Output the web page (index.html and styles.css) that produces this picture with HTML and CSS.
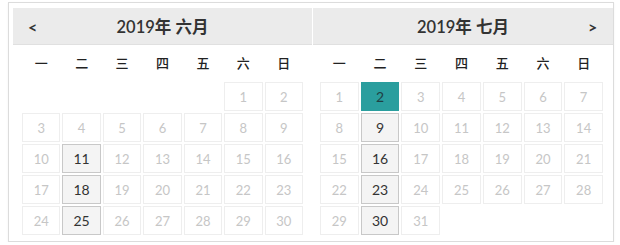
FILE: index.html
```html
<!DOCTYPE html>
<html lang="zh">
<head>
<meta charset="utf-8">
<link rel="stylesheet" href="styles.css">
</head>
<body>
<div class="picker">
  <div class="panel">
    <div class="head"><span class="nav">&lt;</span><span class="title">2019年 六月</span><span class="nav"></span></div>
    <div class="grid">
      <div class="wd">一</div><div class="wd">二</div><div class="wd">三</div><div class="wd">四</div><div class="wd">五</div><div class="wd">六</div><div class="wd">日</div>
      <div class="blank"></div><div class="blank"></div><div class="blank"></div><div class="blank"></div><div class="blank"></div>
      <div class="d">1</div><div class="d">2</div>
      <div class="d">3</div><div class="d">4</div><div class="d">5</div><div class="d">6</div><div class="d">7</div><div class="d">8</div><div class="d">9</div>
      <div class="d">10</div><div class="d on">11</div><div class="d">12</div><div class="d">13</div><div class="d">14</div><div class="d">15</div><div class="d">16</div>
      <div class="d">17</div><div class="d on">18</div><div class="d">19</div><div class="d">20</div><div class="d">21</div><div class="d">22</div><div class="d">23</div>
      <div class="d">24</div><div class="d on">25</div><div class="d">26</div><div class="d">27</div><div class="d">28</div><div class="d">29</div><div class="d">30</div>
    </div>
  </div>
  <div class="panel right">
    <div class="head"><span class="nav"></span><span class="title">2019年 七月</span><span class="nav">&gt;</span></div>
    <div class="grid">
      <div class="wd">一</div><div class="wd">二</div><div class="wd">三</div><div class="wd">四</div><div class="wd">五</div><div class="wd">六</div><div class="wd">日</div>
      <div class="d">1</div><div class="d sel">2</div><div class="d">3</div><div class="d">4</div><div class="d">5</div><div class="d">6</div><div class="d">7</div>
      <div class="d">8</div><div class="d on">9</div><div class="d">10</div><div class="d">11</div><div class="d">12</div><div class="d">13</div><div class="d">14</div>
      <div class="d">15</div><div class="d on">16</div><div class="d">17</div><div class="d">18</div><div class="d">19</div><div class="d">20</div><div class="d">21</div>
      <div class="d">22</div><div class="d on">23</div><div class="d">24</div><div class="d">25</div><div class="d">26</div><div class="d">27</div><div class="d">28</div>
      <div class="d">29</div><div class="d on">30</div><div class="d">31</div>
    </div>
  </div>
</div>
</body>
</html>
```

FILE: styles.css
```css
html, body {
  margin: 0;
  padding: 0;
  background: #fff;
}
body {
  font-family: Lato, "Noto Sans CJK SC", sans-serif;
  color: #333;
}
.picker {
  margin: 2px 0 0 8px;
  border: 1px solid #dcdcdc;
  box-shadow: 0 1px 2px rgba(0,0,0,0.06);
  padding: 5px 0 0 4px;
  display: flex;
  width: 600px;
  height: 233px;
}
.panel {
  width: 299px;
  display: flex;
  flex-direction: column;
}
.panel.right {
  width: 300px;
  margin-left: 1px;
}
.head {
  height: 36px;
  background: #ebebeb;
  border-bottom: 1px solid #e0e0e0;
  display: flex;
  align-items: center;
  justify-content: space-between;
  padding: 0 15px;
}
.nav {
  width: 10px;
  font-size: 16px;
  font-weight: 700;
  color: #333;
}
.title {
  font-size: 16.5px;
  font-weight: 600;
  color: #333;
}
.grid {
  display: grid;
  grid-template-columns: repeat(7, 1fr);
  grid-template-rows: 35px repeat(5, 29px);
  row-gap: 2px;
  column-gap: 2px;
  padding: 0 9px;
}
.right .grid {
  padding: 0 10px 0 7px;
}
.wd {
  display: flex;
  align-items: center;
  justify-content: center;
  font-family: "Noto Sans CJK SC", sans-serif;
  font-size: 13px;
  font-weight: 500;
  color: #222;
  margin-bottom: 1px;
}
.d {
  border: 1px solid #eeeeee;
  display: flex;
  align-items: center;
  justify-content: center;
  font-size: 13px;
  color: #c6c6c6;
}
.d.on {
  background: #f4f4f4;
  border-color: #c8c8c8;
  color: #333;
  font-size: 14px;
}
.d.sel {
  background: #2a9e9e;
  border-color: #2a9e9e;
  color: #1f3f44;
  font-size: 14px;
}
```
